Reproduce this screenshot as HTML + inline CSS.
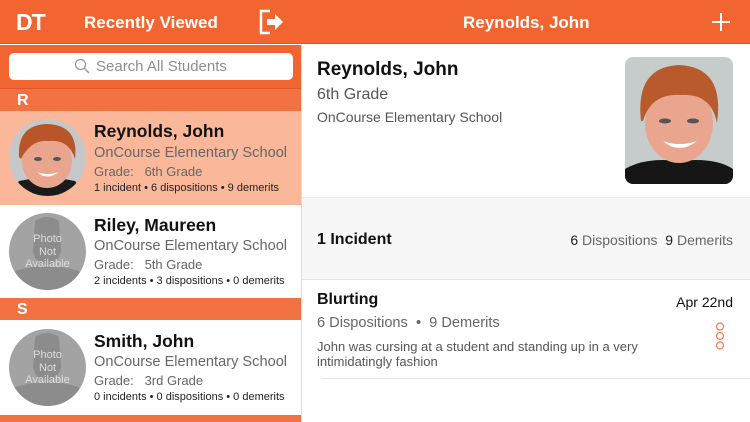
<!DOCTYPE html>
<html><head><meta charset="utf-8"><style>
*{margin:0;padding:0;box-sizing:border-box}
body{width:750px;height:422px;overflow:hidden;font-family:"Liberation Sans",sans-serif;background:#fff;position:relative}
.a{position:absolute}
.hdr{left:0;top:0;width:750px;height:44px;background:#f26531;border-bottom:1px solid #e0582a}
.t{color:#fff;font-size:17px;font-weight:bold}
.sec{left:0;width:301px;height:22px;background:#f37244;color:#fff;font-weight:bold;font-size:16px;padding:3px 0 0 17px}
.nm{font-size:17.5px;font-weight:bold;color:#111;left:94px}
.sc{font-size:14.6px;color:#666;left:94px}
.gr{font-size:13px;color:#666;left:94px}
.st{font-size:11px;color:#222;left:94px}
.av{left:9px;width:77px;height:77px;border-radius:50%;overflow:hidden;background:#a3a3a3}
.pna{position:absolute;left:0;top:20px;width:77px;text-align:center;color:#ddd;font-size:11px;line-height:12.5px}
</style></head><body>
<div class="a hdr"></div>
<div class="a t" style="left:16px;top:9px;font-size:23px;font-weight:900;letter-spacing:-1px">DT</div>
<div class="a t" style="left:84px;top:13px">Recently Viewed</div>
<svg class="a" style="left:258px;top:9px" width="28" height="26" viewBox="0 0 28 26"><path d="M12 2H3v22h9" fill="none" stroke="#fff" stroke-width="2.5"/><path d="M9 10h8V5l8 8-8 8v-5H9z" fill="#fff"/></svg>
<div class="a t" style="left:463px;top:13px">Reynolds, John</div>
<svg class="a" style="left:711px;top:12px" width="20" height="20"><path d="M10 1v18M1 10h18" stroke="#fff" stroke-width="2"/></svg>
<div class="a" style="left:0;top:45px;width:301px;height:44px;background:#f26531;border-bottom:1px solid #e0582a"></div>
<div class="a" style="left:9px;top:53px;width:284px;height:27px;background:#fff;border-radius:5px"></div>
<svg class="a" style="left:74px;top:58px" width="16" height="16"><circle cx="6.5" cy="6.5" r="5" fill="none" stroke="#999" stroke-width="1.3"/><path d="M10 10l5 5" stroke="#999" stroke-width="1.3"/></svg>
<div class="a" style="left:96px;top:58px;font-size:15px;color:#8e8e8e">Search All Students</div>
<div class="a sec" style="top:89px">R</div>
<div class="a" style="left:0;top:111px;width:301px;height:94px;background:#fbb799"></div>
<div class="a av" style="top:119px;background:#c9c9c9">
<svg width="77" height="77"><rect width="77" height="77" fill="#c4c8c8"/><path d="M0 77 L10 62 Q38 56 66 62 L77 77Z" fill="#1a1a1a"/><ellipse cx="38" cy="42" rx="25" ry="27" fill="#e9a58d"/><path d="M10 38 Q8 6 38 5 Q70 6 66 40 Q60 20 40 22 Q22 20 12 40Z" fill="#b8562a"/><path d="M28 53 Q38 62 50 53 Q38 57 28 53Z" fill="#fff"/><ellipse cx="29" cy="40" rx="4" ry="2" fill="#555"/><ellipse cx="48" cy="40" rx="4" ry="2" fill="#555"/></svg></div>
<div class="a nm" style="top:121px">Reynolds, John</div>
<div class="a sc" style="top:145px">OnCourse Elementary School</div>
<div class="a gr" style="top:164px">Grade:&nbsp;&nbsp; 6th Grade</div>
<div class="a st" style="top:182px">1 incident • 6 dispositions • 9 demerits</div>
<div class="a av" style="top:213px"><svg width="77" height="77" class="a" style="left:0;top:0"><path d="M26 8 Q38 0 50 8 L52 38 Q50 50 38 52 Q26 50 24 38Z" fill="#8c8c8c"/><path d="M0 77 L6 58 Q38 48 70 58 L77 77Z" fill="#8c8c8c"/></svg><div class="pna">Photo<br>Not<br>Available</div></div>
<div class="a nm" style="top:215px">Riley, Maureen</div>
<div class="a sc" style="top:238px">OnCourse Elementary School</div>
<div class="a gr" style="top:257px">Grade:&nbsp;&nbsp; 5th Grade</div>
<div class="a st" style="top:275px">2 incidents • 3 dispositions • 0 demerits</div>
<div class="a sec" style="top:298px">S</div>
<div class="a av" style="top:329px"><svg width="77" height="77" class="a" style="left:0;top:0"><path d="M26 8 Q38 0 50 8 L52 38 Q50 50 38 52 Q26 50 24 38Z" fill="#8c8c8c"/><path d="M0 77 L6 58 Q38 48 70 58 L77 77Z" fill="#8c8c8c"/></svg><div class="pna">Photo<br>Not<br>Available</div></div>
<div class="a nm" style="top:331px">Smith, John</div>
<div class="a sc" style="top:354px">OnCourse Elementary School</div>
<div class="a gr" style="top:373px">Grade:&nbsp;&nbsp; 3rd Grade</div>
<div class="a st" style="top:391px">0 incidents • 0 dispositions • 0 demerits</div>
<div class="a" style="left:0;top:415px;width:301px;height:7px;background:#f37244"></div>
<div class="a" style="left:301px;top:44px;width:1px;height:378px;background:#ddd"></div>
<div class="a" style="left:317px;top:59px;font-size:19px;font-weight:bold;color:#111">Reynolds, John</div>
<div class="a" style="left:317px;top:86px;font-size:16px;color:#555">6th Grade</div>
<div class="a" style="left:317px;top:109px;font-size:14px;color:#555">OnCourse Elementary School</div>
<div class="a" style="left:625px;top:57px;width:108px;height:127px;border-radius:8px;overflow:hidden"><svg width="108" height="127"><rect width="108" height="127" fill="#c6cbcb"/><path d="M0 127 L0 112 Q20 100 54 104 Q90 100 108 112 L108 127Z" fill="#161616"/><ellipse cx="54" cy="66" rx="34" ry="40" fill="#eaa58e"/><path d="M16 64 Q10 10 54 8 Q100 10 92 66 Q86 36 56 38 Q26 36 18 64Z" fill="#b85a2c"/><path d="M38 84 Q54 98 72 84 Q54 90 38 84Z" fill="#fff"/><ellipse cx="40" cy="64" rx="6" ry="2.5" fill="#555"/><ellipse cx="68" cy="64" rx="6" ry="2.5" fill="#555"/></svg></div>
<div class="a" style="left:302px;top:197px;width:448px;height:83px;background:#f7f7f7;border-top:1px solid #ececec;border-bottom:1px solid #e4e4e4"></div>
<div class="a" style="left:317px;top:231px;font-size:16px;font-weight:bold;color:#111">1 Incident</div>
<div class="a" style="right:17px;top:232px;font-size:14px;color:#666"><span style="color:#222">6</span> Dispositions&nbsp; <span style="color:#222">9</span> Demerits</div>
<div class="a" style="left:317px;top:291px;font-size:16px;font-weight:bold;color:#111">Blurting</div>
<div class="a" style="right:17px;top:294px;font-size:14px;color:#111">Apr 22nd</div>
<div class="a" style="left:317px;top:315px;font-size:14.6px;color:#666">6 Dispositions &nbsp;•&nbsp; 9 Demerits</div>
<div class="a" style="left:317px;top:339px;font-size:13px;color:#555;line-height:15px">John was cursing at a student and standing up in a very<br>intimidatingly fashion</div>
<svg class="a" style="left:714px;top:321px" width="12" height="30"><circle cx="6" cy="5.5" r="3.5" fill="none" stroke="#f07a50" stroke-width="1.2"/><circle cx="6" cy="15" r="3.5" fill="none" stroke="#f07a50" stroke-width="1.2"/><circle cx="6" cy="24.5" r="3.5" fill="none" stroke="#f07a50" stroke-width="1.2"/></svg>
<div class="a" style="left:322px;top:378px;width:428px;height:1px;background:#e4e4e4"></div>
</body></html>
